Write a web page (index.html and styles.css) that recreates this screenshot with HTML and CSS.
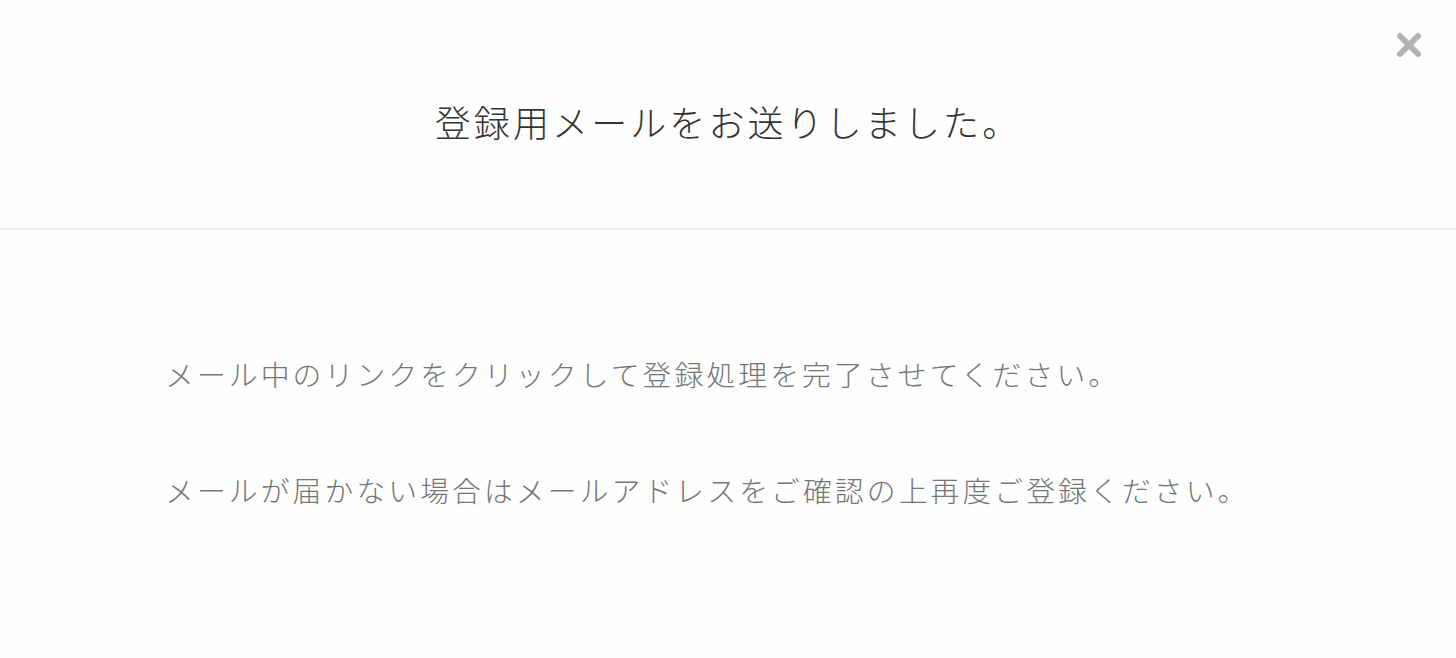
FILE: index.html
```html
<!DOCTYPE html>
<html lang="ja">
<head>
<meta charset="utf-8">
<title>登録用メールをお送りしました。</title>
<link rel="stylesheet" href="styles.css">
</head>
<body>
<div class="modal">
  <header class="modal-header">
    <h1 class="modal-title">登録用メールをお送りしました。</h1>
    <button class="modal-close" type="button" aria-label="閉じる">
      <svg width="28" height="28" viewBox="0 0 28 28" aria-hidden="true">
        <path d="M5 5 L23 23 M23 5 L5 23" stroke="#b3b3b3" stroke-width="6" stroke-linecap="round" fill="none"/>
      </svg>
    </button>
  </header>
  <div class="modal-body">
    <p class="modal-text">メール中のリンクをクリックして登録処理を完了させてください。</p>
    <p class="modal-text">メールが届かない場合はメールアドレスをご確認の上再度ご登録ください。</p>
  </div>
</div>
</body>
</html>
```
FILE: styles.css
```css
html, body {
  margin: 0;
  padding: 0;
  background: #fefefe;
}

body {
  font-family: "Noto Sans CJK JP", "Noto Sans", sans-serif;
  font-weight: 300;
}

.modal {
  width: 1456px;
  min-height: 658px;
  background: #fefefe;
}

.modal-header {
  position: relative;
  box-sizing: border-box;
  height: 230px;
  padding-top: 96px;
  border-bottom: 2px solid #eeeeee;
  text-align: center;
}

.modal-title {
  margin: 0;
  font-size: 36px;
  line-height: 50px;
  font-weight: 300;
  letter-spacing: 3.1px;
  color: #333333;
}

.modal-close {
  position: absolute;
  top: 31px;
  right: 33px;
  width: 28px;
  height: 28px;
  padding: 0;
  border: 0;
  background: transparent;
  cursor: pointer;
}

.modal-close svg {
  display: block;
}

.modal-body {
  padding: 122px 0 0 165px;
}

.modal-text {
  margin: 0 0 72px;
  font-size: 28.8px;
  line-height: 44px;
  letter-spacing: 3.1px;
  color: #757575;
}
```
